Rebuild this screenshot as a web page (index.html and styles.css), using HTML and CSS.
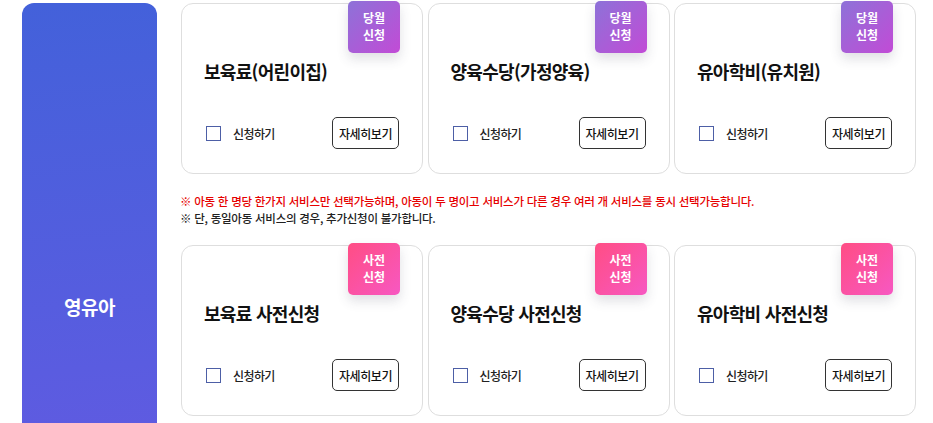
FILE: index.html
```html
<!DOCTYPE html>
<html lang="ko">
<head>
<meta charset="utf-8">
<link rel="stylesheet" href="styles.css">
</head>
<body>
<div class="page">
  <aside class="side"><span class="side-title">영유아</span></aside>
  <main class="main">
    <div class="grid">
      <div class="card">
        <span class="badge badge-month">당월<br>신청</span>
        <h3 class="card-title">보육료(어린이집)</h3>
        <div class="card-foot">
          <label class="check"><span class="box"></span><span class="check-label">신청하기</span></label>
          <button class="more">자세히보기</button>
        </div>
      </div>
      <div class="card">
        <span class="badge badge-month">당월<br>신청</span>
        <h3 class="card-title">양육수당(가정양육)</h3>
        <div class="card-foot">
          <label class="check"><span class="box"></span><span class="check-label">신청하기</span></label>
          <button class="more">자세히보기</button>
        </div>
      </div>
      <div class="card">
        <span class="badge badge-month">당월<br>신청</span>
        <h3 class="card-title">유아학비(유치원)</h3>
        <div class="card-foot">
          <label class="check"><span class="box"></span><span class="check-label">신청하기</span></label>
          <button class="more">자세히보기</button>
        </div>
      </div>
    </div>
    <div class="notice">
      <p class="notice-red">※ 아동 한 명당 한가지 서비스만 선택가능하며, 아동이 두 명이고 서비스가 다른 경우 여러 개 서비스를 동시 선택가능합니다.</p>
      <p class="notice-dark">※ 단, 동일아동 서비스의 경우, 추가신청이 불가합니다.</p>
    </div>
    <div class="grid">
      <div class="card">
        <span class="badge badge-pre">사전<br>신청</span>
        <h3 class="card-title">보육료 사전신청</h3>
        <div class="card-foot">
          <label class="check"><span class="box"></span><span class="check-label">신청하기</span></label>
          <button class="more">자세히보기</button>
        </div>
      </div>
      <div class="card">
        <span class="badge badge-pre">사전<br>신청</span>
        <h3 class="card-title">양육수당 사전신청</h3>
        <div class="card-foot">
          <label class="check"><span class="box"></span><span class="check-label">신청하기</span></label>
          <button class="more">자세히보기</button>
        </div>
      </div>
      <div class="card">
        <span class="badge badge-pre">사전<br>신청</span>
        <h3 class="card-title">유아학비 사전신청</h3>
        <div class="card-foot">
          <label class="check"><span class="box"></span><span class="check-label">신청하기</span></label>
          <button class="more">자세히보기</button>
        </div>
      </div>
    </div>
  </main>
</div>
</body>
</html>
```

FILE: styles.css
```css
* { box-sizing: border-box; }
html, body { margin: 0; padding: 0; background: #fff; }
body {
  font-family: "Noto Sans CJK KR", "Noto Sans", sans-serif;
  color: #222;
  overflow: hidden;
}
.page {
  display: flex;
  align-items: flex-start;
  gap: 24px;
  padding: 3px 0 0 22px;
}
.side {
  flex: 0 0 135px;
  height: 606px;
  border-radius: 12px 12px 0 0;
  background: linear-gradient(175deg, #4361da 0%, #5a5ce0 60%, #6a58e2 100%);
  display: flex;
  align-items: center;
  justify-content: center;
}
.side-title {
  color: #fff;
  font-size: 19px;
  font-weight: 700;
  letter-spacing: -0.5px;
}
.main {
  width: 735px;
  display: flex;
  flex-direction: column;
}
.grid {
  display: grid;
  grid-template-columns: repeat(3, 1fr);
  column-gap: 4.5px;
}
.card {
  position: relative;
  height: 171px;
  border: 1px solid #dedede;
  border-radius: 12px;
  padding: 0 23px 0 22px;
  display: flex;
  flex-direction: column;
}
.badge {
  position: absolute;
  top: -3px;
  right: 22px;
  width: 52px;
  height: 52px;
  border-radius: 5px;
  color: #fff;
  font-size: 12px;
  font-weight: 700;
  line-height: 17px;
  text-align: center;
  padding-top: 8px;
  box-shadow: 0 6px 12px rgba(60, 60, 90, 0.16);
}
.badge-month { background: linear-gradient(135deg, #8d72d8 0%, #c24bd6 100%); }
.badge-pre { background: linear-gradient(135deg, #ff4d84 0%, #f758c2 100%); }
.card-title {
  margin: 52px 0 0;
  font-size: 18px;
  font-weight: 700;
  line-height: 30px;
  letter-spacing: -0.7px;
  color: #111;
}
.card-foot {
  margin-top: auto;
  margin-bottom: 24px;
  display: flex;
  align-items: center;
  justify-content: space-between;
}
.check {
  display: flex;
  align-items: center;
  gap: 12px;
  padding-left: 2px;
}
.box {
  width: 15px;
  height: 15px;
  border: 1px solid #4d5fa6;
  background: #fff;
}
.check-label {
  font-size: 12px;
  font-weight: 500;
  color: #222;
  letter-spacing: -0.6px;
}
.more {
  font-family: inherit;
  width: 67px;
  height: 32px;
  border: 1px solid #333;
  border-radius: 5px;
  background: #fff;
  font-size: 12px;
  font-weight: 500;
  color: #111;
  padding: 0;
  letter-spacing: -0.4px;
}
.notice {
  padding: 19px 0 18px 0;
  margin-left: -1px;
}
.notice p {
  margin: 0;
  font-size: 11.5px;
  font-weight: 500;
  line-height: 17px;
  letter-spacing: -0.25px;
}
.notice-red { color: #e60000; }
.notice-dark { color: #222; }
```
